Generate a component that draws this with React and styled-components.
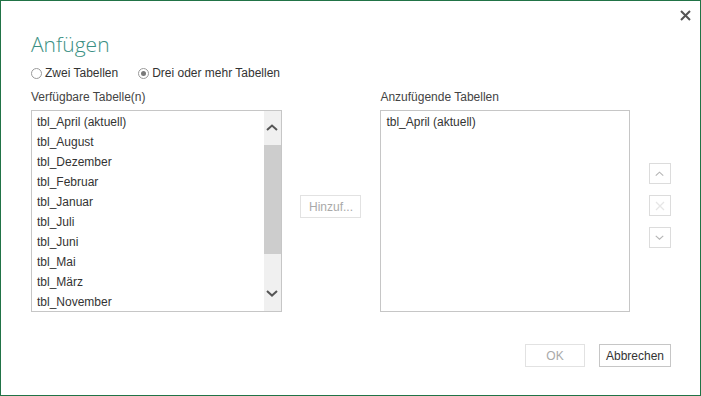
import styled, { createGlobalStyle } from "styled-components";

const GlobalStyle = createGlobalStyle`
  html, body {
    margin: 0;
    padding: 0;
    background: #ffffff;
  }
  body {
    font-family: "Segoe UI", "Liberation Sans", Arial, sans-serif;
    font-size: 12px;
    color: #333333;
  }
`;

const Dialog = styled.div`
  box-sizing: border-box;
  width: 701px;
  height: 396px;
  border: 1px solid #217346;
  background: #ffffff;
  display: flex;
  flex-direction: column;
  padding: 0 29px 0 30px;
`;

const TopBar = styled.div`
  display: flex;
  justify-content: flex-end;
  height: 31px;
  margin-right: -21px;
`;

const CloseButton = styled.button`
  width: 14px;
  height: 14px;
  margin-top: 7px;
  padding: 0;
  border: none;
  background: none;
  display: flex;
  align-items: center;
  justify-content: center;
`;

const Title = styled.h1`
  margin: 0;
  font-family: "Segoe UI Light", "Open Sans", "Liberation Sans", sans-serif;
  font-weight: 300;
  font-size: 21px;
  line-height: 24px;
  color: #3a8f83;
  height: 31px;
`;

const RadioRow = styled.div`
  display: flex;
  align-items: center;
  gap: 20px;
  height: 20px;
`;

const RadioLabel = styled.label`
  display: flex;
  align-items: center;
  gap: 3px;
  color: #333333;
`;

const RadioCircle = styled.span`
  box-sizing: border-box;
  width: 11px;
  height: 11px;
  border-radius: 50%;
  border: 1px solid #9a9a9a;
  background: #ffffff;
  display: flex;
  align-items: center;
  justify-content: center;
  &::after {
    content: "";
    width: 5px;
    height: 5px;
    border-radius: 50%;
    background: ${(p) => (p.$checked ? "#7a7a7a" : "transparent")};
  }
`;

const Columns = styled.div`
  display: flex;
  align-items: flex-start;
  margin-top: 8px;
`;

const Column = styled.div`
  display: flex;
  flex-direction: column;
  width: ${(p) => p.$width}px;
`;

const FieldLabel = styled.div`
  height: 19px;
  line-height: 12px;
  color: #444444;
`;

const ListBox = styled.div`
  box-sizing: border-box;
  height: 202px;
  border: 1px solid #c6c6c6;
  display: flex;
  background: #ffffff;
`;

const Items = styled.ul`
  list-style: none;
  margin: 0;
  padding: 1px 0 0 5px;
  flex: 1;
  overflow: hidden;
`;

const Item = styled.li`
  height: 20px;
  line-height: 20px;
  color: #333333;
  white-space: nowrap;
`;

const Scrollbar = styled.div`
  width: 17px;
  background: #f0f0f0;
  display: flex;
  flex-direction: column;
  align-items: center;
`;

const ScrollArrow = styled.div`
  height: 34px;
  width: 17px;
  display: flex;
  align-items: center;
  justify-content: center;
`;

const Thumb = styled.div`
  width: 17px;
  height: 109px;
  background: #cdcdcd;
`;

const Spacer = styled.div`
  flex: 1;
`;

const Middle = styled.div`
  width: 99px;
  display: flex;
  justify-content: center;
  padding-top: 104px;
`;

const GhostButton = styled.button`
  box-sizing: border-box;
  width: ${(p) => p.$width}px;
  height: 23px;
  border: 1px solid ${(p) => (p.$disabled ? "#e2e2e2" : "#c6c6c6")};
  background: #ffffff;
  color: ${(p) => (p.$disabled ? "#a9a9a9" : "#333333")};
  font-family: inherit;
  font-size: 12px;
  padding: 0;
`;

const SideButtons = styled.div`
  display: flex;
  flex-direction: column;
  gap: 11px;
  margin-left: 19px;
  padding-top: 72px;
`;

const IconButton = styled.button`
  box-sizing: border-box;
  width: 22px;
  height: 21px;
  border: 1px solid #dcdcdc;
  background: #ffffff;
  padding: 0;
  display: flex;
  align-items: center;
  justify-content: center;
`;

const Footer = styled.div`
  display: flex;
  justify-content: flex-end;
  gap: 14px;
  margin-top: 32px;
`;

const tables = [
  "tbl_April (aktuell)",
  "tbl_August",
  "tbl_Dezember",
  "tbl_Februar",
  "tbl_Januar",
  "tbl_Juli",
  "tbl_Juni",
  "tbl_Mai",
  "tbl_März",
  "tbl_November",
];

function Chevron({ up, color = "#555", size = 12, width = 2 }) {
  return (
    <svg width={size} height={size * 0.6} viewBox="0 0 12 7">
      <path
        d={up ? "M1 6 L6 1.5 L11 6" : "M1 1 L6 5.5 L11 1"}
        fill="none"
        stroke={color}
        strokeWidth={width}
      />
    </svg>
  );
}

export default function App() {
  return (
    <>
      <GlobalStyle />
      <Dialog>
        <TopBar>
          <CloseButton>
            <svg width="11" height="11" viewBox="0 0 11 11">
              <path d="M1 1 L10 10 M10 1 L1 10" stroke="#555" strokeWidth="2" />
            </svg>
          </CloseButton>
        </TopBar>
        <Title>Anfügen</Title>
        <RadioRow>
          <RadioLabel>
            <RadioCircle />
            Zwei Tabellen
          </RadioLabel>
          <RadioLabel>
            <RadioCircle $checked />
            Drei oder mehr Tabellen
          </RadioLabel>
        </RadioRow>
        <Columns>
          <Column $width={251}>
            <FieldLabel>Verfügbare Tabelle(n)</FieldLabel>
            <ListBox>
              <Items>
                {tables.map((t) => (
                  <Item key={t}>{t}</Item>
                ))}
              </Items>
              <Scrollbar>
                <ScrollArrow>
                  <Chevron up />
                </ScrollArrow>
                <Thumb />
                <Spacer />
                <ScrollArrow>
                  <Chevron />
                </ScrollArrow>
              </Scrollbar>
            </ListBox>
          </Column>
          <Middle>
            <GhostButton $width={61} $disabled>
              Hinzuf...
            </GhostButton>
          </Middle>
          <Column $width={250}>
            <FieldLabel>Anzufügende Tabellen</FieldLabel>
            <ListBox>
              <Items>
                <Item>tbl_April (aktuell)</Item>
              </Items>
            </ListBox>
          </Column>
          <SideButtons>
            <IconButton>
              <Chevron up color="#b5b5b5" size={9} width={1.5} />
            </IconButton>
            <IconButton>
              <svg width="10" height="10" viewBox="0 0 10 10">
                <path d="M1 1 L9 9 M9 1 L1 9" stroke="#e6e6e6" strokeWidth="1.3" />
              </svg>
            </IconButton>
            <IconButton>
              <Chevron color="#b5b5b5" size={9} width={1.5} />
            </IconButton>
          </SideButtons>
        </Columns>
        <Footer>
          <GhostButton $width={60} $disabled>
            OK
          </GhostButton>
          <GhostButton $width={72}>Abbrechen</GhostButton>
        </Footer>
      </Dialog>
    </>
  );
}
